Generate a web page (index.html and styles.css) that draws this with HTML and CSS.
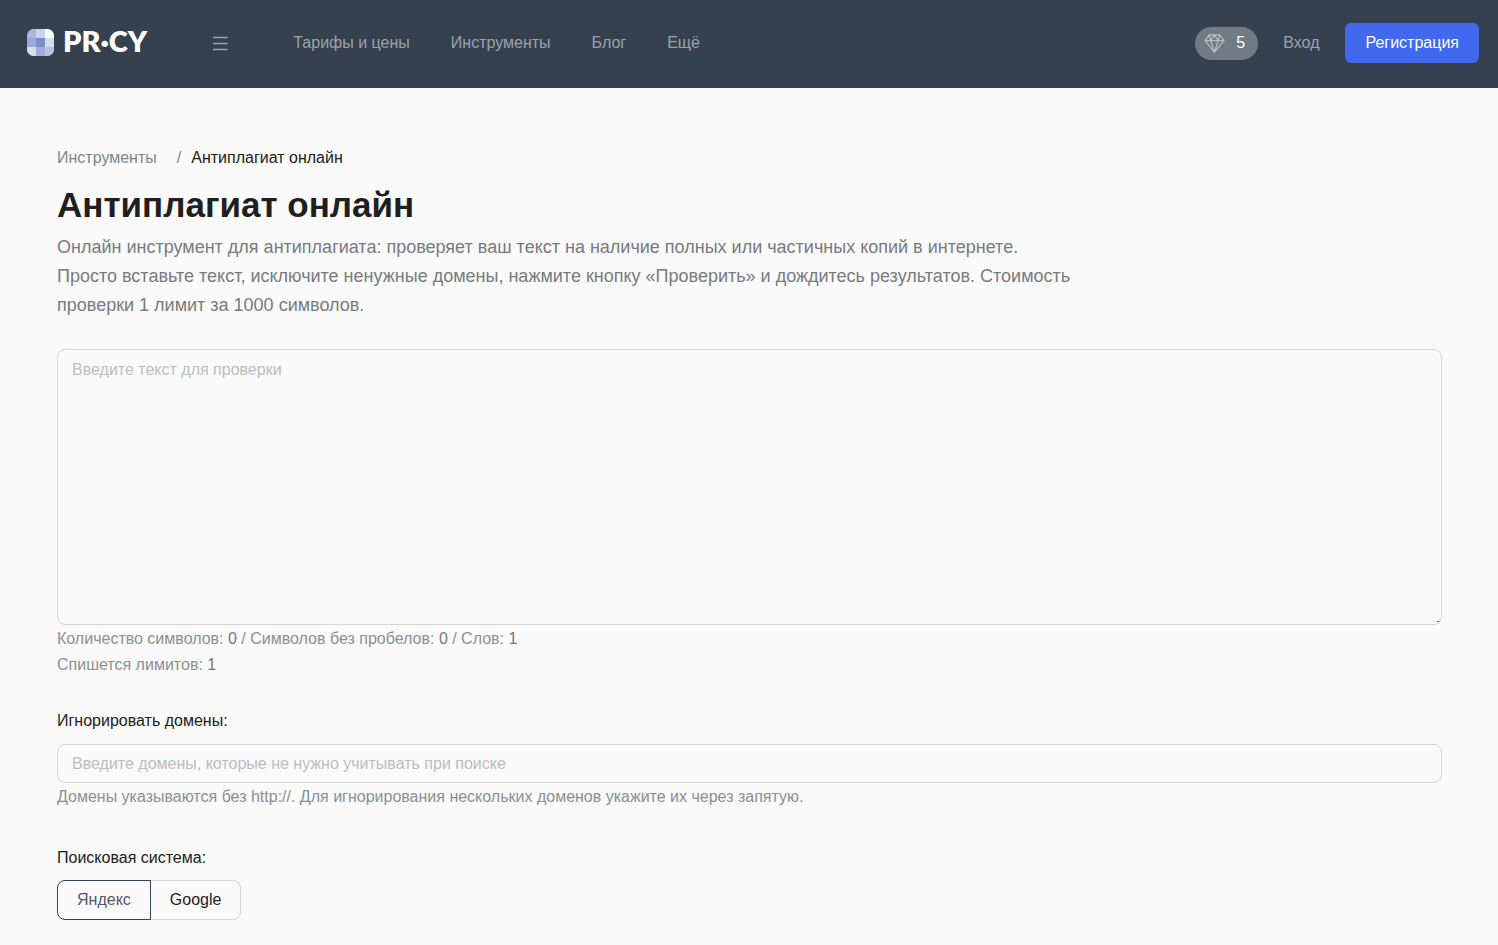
FILE: index.html
```html
<!DOCTYPE html>
<html lang="ru">
<head>
<meta charset="utf-8">
<meta name="viewport" content="width=device-width, initial-scale=1">
<title>Антиплагиат онлайн</title>
<link rel="stylesheet" href="styles.css">
</head>
<body>
<header class="header">
  <a class="logo" href="#">
    <svg class="logo-mark" viewBox="0 0 27 27" aria-hidden="true">
      <defs><clipPath id="mark"><rect width="27" height="27" rx="7"/></clipPath></defs>
      <g clip-path="url(#mark)">
        <rect width="27" height="27" fill="#c9d1ea"/>
        <rect width="9" height="9" fill="#a9b7da"/>
        <rect x="9" width="9" height="9" fill="#cdd3ea"/>
        <rect x="18" width="9" height="9" fill="#fbfcff"/>
        <rect y="9" width="9" height="9" fill="#9aabd8"/>
        <rect x="9" y="9" width="9" height="9" fill="#7b8fc8"/>
        <rect x="18" y="9" width="9" height="9" fill="#d5dbee"/>
        <rect y="18" width="9" height="9" fill="#d8def2"/>
        <rect x="9" y="18" width="9" height="9" fill="#a0aede"/>
        <rect x="18" y="18" width="9" height="9" fill="#b8c3e4"/>
      </g>
    </svg>
    <span class="logo-text">PR·CY</span>
  </a>
  <button class="menu-button" type="button" aria-label="Меню">
    <svg class="menu-icon" viewBox="0 0 16 16" aria-hidden="true"><path d="M1 2.500h14.500M1 8.500h14.500M1 14.500h14.500" fill="none" stroke="currentColor" stroke-width="1.300"/></svg>
  </button>
  <nav class="nav">
    <a class="nav-link" href="#">Тарифы и цены</a>
    <a class="nav-link" href="#">Инструменты</a>
    <a class="nav-link" href="#">Блог</a>
    <a class="nav-link" href="#">Ещё</a>
  </nav>
  <div class="account">
    <a class="limits" href="#">
      <svg class="gem" viewBox="0 0 22 20" aria-hidden="true"><path d="M5.500 1h11l4.500 6-10 12L1 7zM1 7h20M5.500 1l1.500 6 4 12 4-12 1.500-6M7 7l4-6 4 6" fill="none" stroke="currentColor" stroke-width="1.300" stroke-linejoin="round"/></svg>
      <span>5</span>
    </a>
    <a class="login" href="#">Вход</a>
    <button class="register" type="button">Регистрация</button>
  </div>
</header>
<main class="content">
  <nav class="breadcrumbs" aria-label="Навигация">
    <a class="crumb" href="#">Инструменты</a>
    <span class="crumb-separator">/</span>
    <span class="crumb-current">Антиплагиат онлайн</span>
  </nav>
  <h1 class="title">Антиплагиат онлайн</h1>
  <p class="lead">Онлайн инструмент для антиплагиата: проверяет ваш текст на наличие полных или частичных копий в интернете.<br>Просто вставьте текст, исключите ненужные домены, нажмите кнопку «Проверить» и дождитесь результатов. Стоимость проверки 1 лимит за 1000 символов.</p>
  <form class="form">
    <textarea class="field text-field" aria-label="Текст для проверки" placeholder="Введите текст для проверки"></textarea>
    <p class="hint">Количество символов: <span class="count">0</span> / Символов без пробелов: <span class="count">0</span> / Слов: <span class="count">1</span><br>Спишется лимитов: <span class="count">1</span></p>
    <div class="group">
      <label class="label" for="domains">Игнорировать домены:</label>
      <input class="field domain-field" id="domains" type="text" placeholder="Введите домены, которые не нужно учитывать при поиске">
      <p class="hint">Домены указываются без http://. Для игнорирования нескольких доменов укажите их через запятую.</p>
    </div>
    <fieldset class="group engines">
      <legend class="label engine-label">Поисковая система:</legend>
      <div class="segments">
        <label class="segment"><input class="segment-input" type="radio" name="engine" checked>Яндекс</label>
        <label class="segment"><input class="segment-input" type="radio" name="engine">Google</label>
      </div>
    </fieldset>
  </form>
</main>
</body>
</html>
```
FILE: styles.css
```css
* { box-sizing: border-box; }
body {
  margin: 0;
  background: #fafafa;
  color: #212121;
  font: 16px/26px "Liberation Sans", Arial, sans-serif;
}
a { color: inherit; text-decoration: none; }
button, input, textarea { font: inherit; }
p, h1 { margin: 0; }

.header {
  display: flex;
  align-items: center;
  height: 88px;
  padding: 0 19px 2px 27px;
  background: #36414f;
  color: #9ba2aa;
}
.logo { display: flex; align-items: center; gap: 9px; padding-bottom: 2px; color: #fff; }
.logo-mark { width: 27px; height: 27px; }
.logo-text { padding-bottom: 2px; font: 800 29px/32px Lato, sans-serif; }
.menu-button {
  display: flex;
  margin-left: 65px;
  padding: 0;
  border: 0;
  background: none;
  color: inherit;
}
.menu-icon { width: 16px; height: 16px; }
.nav { display: flex; gap: 41px; margin-left: 65px; }
.account { display: flex; align-items: center; margin-left: auto; }
.limits {
  display: flex;
  align-items: center;
  gap: 11px;
  height: 33px;
  padding: 0 13px 0 9px;
  border-radius: 17px;
  background: #727a84;
  color: #fff;
}
.gem { width: 21px; height: 19px; color: #b9bdc2; }
.login { margin: 0 26px 0 25px; }
.register {
  height: 40px;
  padding: 0 20px;
  border: 0;
  border-radius: 6px;
  background: #4069f0;
  color: #fff;
}

.content { padding: 57px 56px 24px 57px; }
.breadcrumbs { display: flex; color: #808488; }
.crumb-separator { margin: 0 10px 0 20px; }
.crumb-current { color: #212121; }
.title { margin-top: 12px; font-size: 35px; line-height: 44px; color: #1f1f1f; }
.lead {
  max-width: 1040px;
  margin-top: 6px;
  font-size: 18px;
  line-height: 29px;
  color: #777b7f;
}
.form { margin-top: 29px; }
.field {
  display: block;
  width: 100%;
  border: 1px solid #d5d5d7;
  border-radius: 8px;
  background: transparent;
  color: #212121;
}
.field::placeholder { color: #bdbdbf; opacity: 1; }
.text-field { height: 276px; padding: 7px 14px; resize: vertical; }
.text-field::-webkit-resizer { background: linear-gradient(#555, #555) 11px 12px / 2px 1px no-repeat; }
.domain-field { height: 39px; padding: 0 14px; }
.hint { padding-top: 1px; color: #8c8f92; }
.count { color: #74777a; }
.group { margin: 30px 0 0; padding: 0; border: 0; }
.label { display: block; padding: 0; margin-bottom: 10px; }
.engines { margin-top: 35px; }
.engine-label { margin-bottom: 9px; }
.segments { display: flex; width: fit-content; }
.segment {
  position: relative;
  display: flex;
  align-items: center;
  height: 40px;
  padding: 0 19px;
  border: 1px solid #d5d5d7;
}
.segment:first-child { border-radius: 8px 0 0 8px; }
.segment:last-child { border-left: 0; border-radius: 0 8px 8px 0; }
.segment:has(:checked) { border-color: #36414f; color: #525b66; }
.segment-input { position: absolute; inset: 0; margin: 0; opacity: 0; }
```
